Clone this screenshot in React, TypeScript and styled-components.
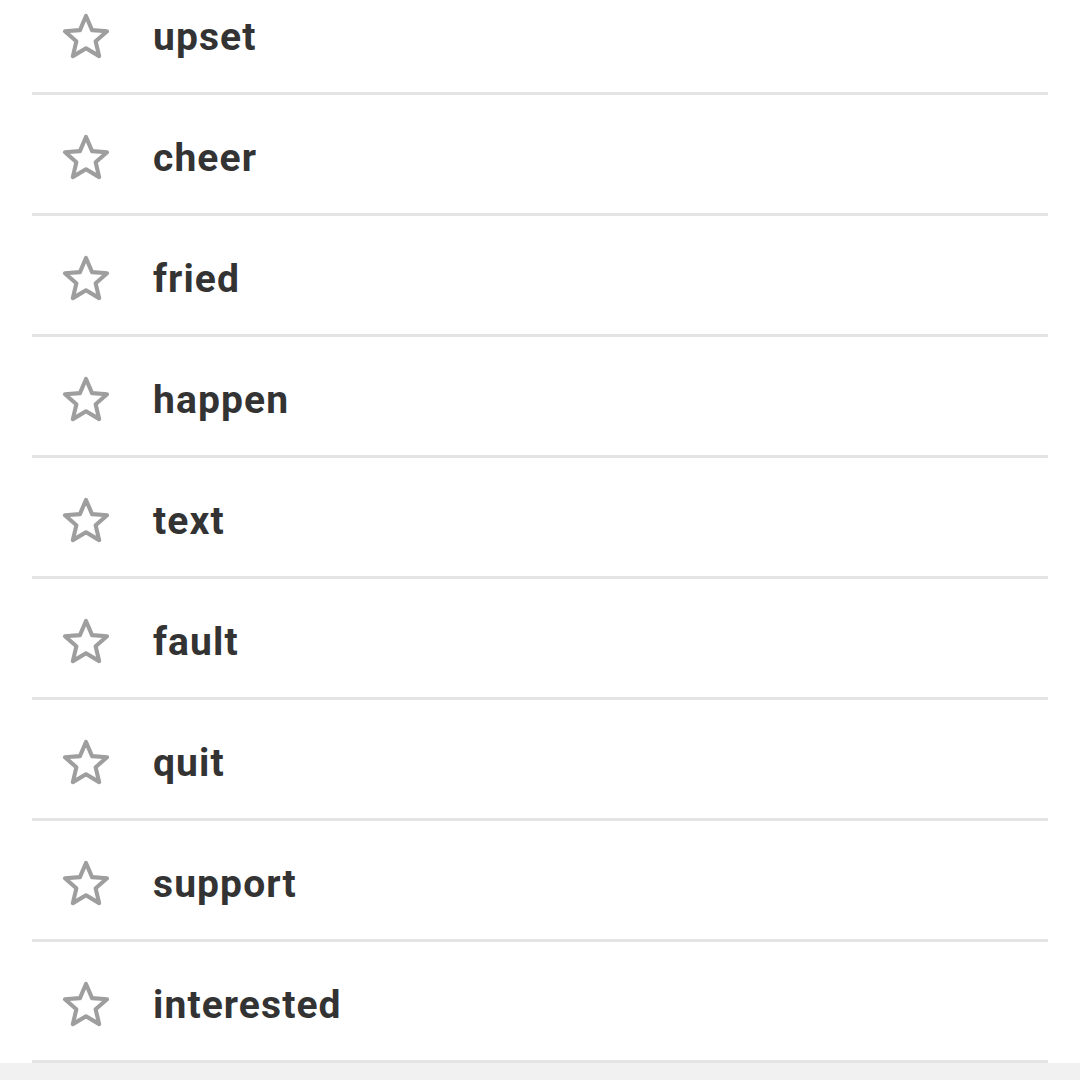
import React from "react";
import styled, { createGlobalStyle } from "styled-components";

const Global = createGlobalStyle`
  html, body {
    margin: 0;
    padding: 0;
    background: #f1f1f1;
    overflow: hidden;
  }
  #root {
    width: 1080px;
    height: 1080px;
    overflow: hidden;
    background: #f1f1f1;
  }
`;

const List = styled.ul`
  list-style: none;
  margin: -26px 0 0 0;
  padding: 0;
  background: #ffffff;
`;

const Row = styled.li`
  display: flex;
  align-items: center;
  height: 111px;
  padding-top: 7px;
  margin: 0 32px;
  border-bottom: 3px solid #e4e4e4;
`;

const StarBox = styled.span`
  display: flex;
  align-items: center;
  justify-content: center;
  width: 54px;
  height: 54px;
  margin-left: 27px;
  margin-right: 40px;
  color: #9e9e9e;
`;

const Word = styled.span`
  font-family: Roboto, "Liberation Sans", sans-serif;
  font-weight: 700;
  font-size: 39px;
  color: #333333;
  letter-spacing: 1.1px;
`;

const StarIcon = () => (
  <svg width="54" height="54" viewBox="0 0 50 50" fill="none">
    <path
      d="M25 5.5 L30.6 18.6 L44.5 19.7 L33.9 28.9 L37.2 42.7 L25 35.4 L12.8 42.7 L16.1 28.9 L5.5 19.7 L19.4 18.6 Z"
      stroke="currentColor"
      strokeWidth="3.8"
      strokeLinejoin="round"
    />
  </svg>
);

const words = [
  "upset",
  "cheer",
  "fried",
  "happen",
  "text",
  "fault",
  "quit",
  "support",
  "interested",
];

export default function App() {
  return (
    <>
      <Global />
      <List>
        {words.map((w) => (
          <Row key={w}>
            <StarBox>
              <StarIcon />
            </StarBox>
            <Word>{w}</Word>
          </Row>
        ))}
      </List>
    </>
  );
}
